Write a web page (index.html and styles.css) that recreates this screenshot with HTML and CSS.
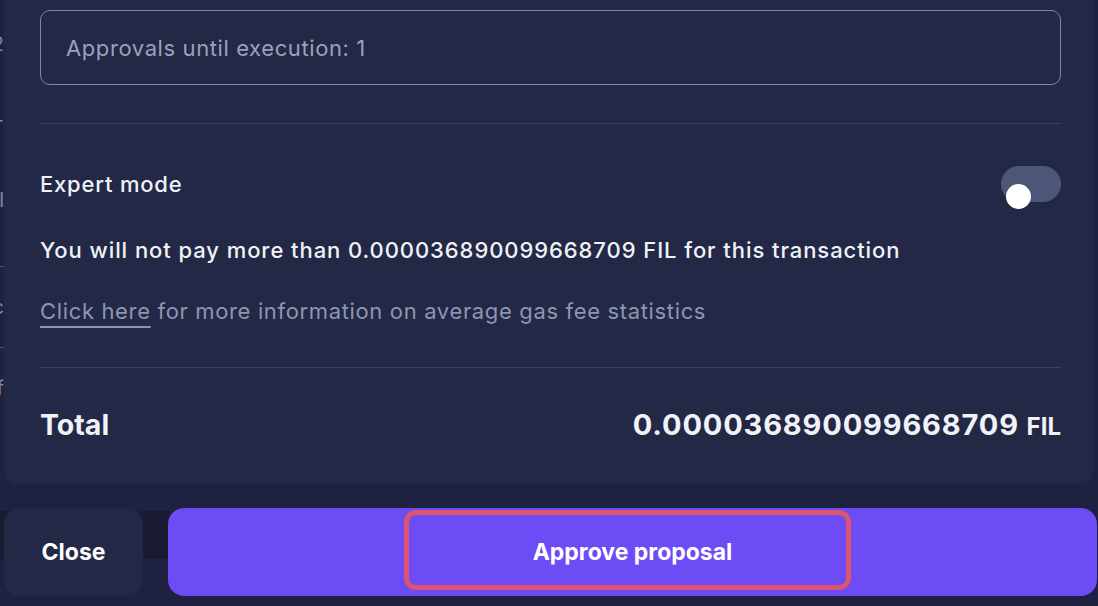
FILE: index.html
```html
<!DOCTYPE html>
<html lang="en">
<head>
<meta charset="utf-8">
<title>Approve proposal</title>
<link rel="stylesheet" href="styles.css">
</head>
<body>
<div class="page">
  <div class="top">
    <div class="peek" aria-hidden="true">
      <span class="peek-line l1">2</span>
      <span class="peek-line l2">-</span>
      <span class="peek-line l3">l</span>
      <span class="peek-rule r1"></span>
      <span class="peek-line l4">c</span>
      <span class="peek-rule r2"></span>
      <span class="peek-line l5">f</span>
    </div>
    <section class="card">
      <div class="field">Approvals until execution: 1</div>
      <hr class="divider divider-top">
      <div class="expert-row">
        <span class="expert-label">Expert mode</span>
        <span class="toggle"><span class="knob"></span></span>
      </div>
      <p class="fee">You will not pay more than 0.000036890099668709 FIL for this transaction</p>
      <p class="info"><a class="link">Click here</a> for more information on average gas fee statistics</p>
      <hr class="divider divider-bottom">
      <div class="total-row">
        <span class="total-label">Total</span>
        <span class="total-value">0.000036890099668709 <span class="unit">FIL</span></span>
      </div>
    </section>
  </div>
  <div class="actions">
    <button class="btn btn-close">Close</button>
    <button class="btn btn-approve">Approve proposal<span class="highlight"></span></button>
  </div>
</div>
</body>
</html>
```
FILE: styles.css
```css
* { box-sizing: border-box; }

body {
  margin: 0;
  width: 1098px;
  height: 606px;
  overflow: hidden;
  background: #1e2240;
  font-family: Inter, "Liberation Sans", sans-serif;
  color: #f1f2f7;
}

.page {
  display: flex;
  flex-direction: column;
  height: 606px;
}

.top {
  display: flex;
  height: 484px;
}

.peek {
  width: 4px;
  overflow: hidden;
  display: flex;
  flex-direction: column;
  align-items: flex-end;
  color: #80869f;
  font-size: 20px;
  line-height: 20px;
}

.peek-line { white-space: nowrap; }
.l1 { margin-top: 34px; }
.l2 { margin-top: 56px; }
.l3 { margin-top: 60px; }
.peek-rule { width: 6px; height: 1px; background: #4a5170; flex: none; }
.r1 { margin-top: 56px; }
.l4 { margin-top: 30px; }
.r2 { margin-top: 30px; }
.l5 { margin-top: 30px; }

.card {
  flex: 1;
  margin-right: 4px;
  background: #222845;
  border-radius: 0 0 14px 14px;
  padding: 10px 33px 0 36px;
  display: flex;
  flex-direction: column;
}

.field {
  height: 75px;
  border: 1.5px solid #7f87a5;
  border-radius: 10px;
  padding-left: 25px;
  display: flex;
  align-items: center;
  font-size: 22px;
  letter-spacing: 0.6px;
  color: #9ba1bc;
}

.divider {
  border: 0;
  height: 1px;
  background: #3b4260;
  margin: 0;
}

.divider-top { margin-top: 38px; }

.expert-row {
  display: flex;
  justify-content: space-between;
  align-items: center;
  height: 36px;
  margin-top: 42px;
}

.expert-label {
  font-size: 22px;
  font-weight: 500;
  letter-spacing: 0.8px;
}

.toggle {
  position: relative;
  width: 60px;
  height: 36px;
  border-radius: 18px;
  background: #4e5677;
}

.knob {
  position: absolute;
  left: 5px;
  top: 18px;
  width: 25px;
  height: 25px;
  border-radius: 50%;
  background: #ffffff;
}

.fee {
  margin: 35px 0 0;
  font-size: 22px;
  font-weight: 500;
  letter-spacing: 0.93px;
  line-height: 26px;
}

.info {
  margin: 35px 0 0;
  font-size: 22px;
  letter-spacing: 0.65px;
  line-height: 26px;
  color: #8e95b2;
}

.link {
  text-decoration: underline;
  text-decoration-thickness: 1.5px;
  text-underline-offset: 7px;
}

.divider-bottom { margin-top: 43px; }

.total-row {
  display: flex;
  justify-content: space-between;
  align-items: baseline;
  margin-top: 39px;
  line-height: 36px;
  font-weight: 700;
}

.total-label { font-size: 28.5px; }

.total-value {
  font-size: 29px;
  letter-spacing: 0.85px;
}

.unit { font-size: 24px; letter-spacing: 0; }

.actions {
  display: flex;
  gap: 25px;
  height: 88px;
  margin-top: 24px;
  padding: 0 1px 0 4px;
  background: linear-gradient(to bottom, transparent 3px, #181b32 3px, #181b32 51px, transparent 51px) no-repeat;
  background-size: 170px 100%;
}

.btn {
  border: 0;
  border-radius: 16px;
  font-family: inherit;
  font-size: 23px;
  font-weight: 700;
  color: #ffffff;
  padding: 0;
}

.btn-close {
  width: 139px;
  background: #222845;
}

.btn-approve {
  flex: 1;
  position: relative;
  background: #6d4cf5;
}

.highlight {
  position: absolute;
  left: 236px;
  top: 2px;
  width: 447px;
  height: 80px;
  border: 5px solid #dc546e;
  border-radius: 12px;
}
```
